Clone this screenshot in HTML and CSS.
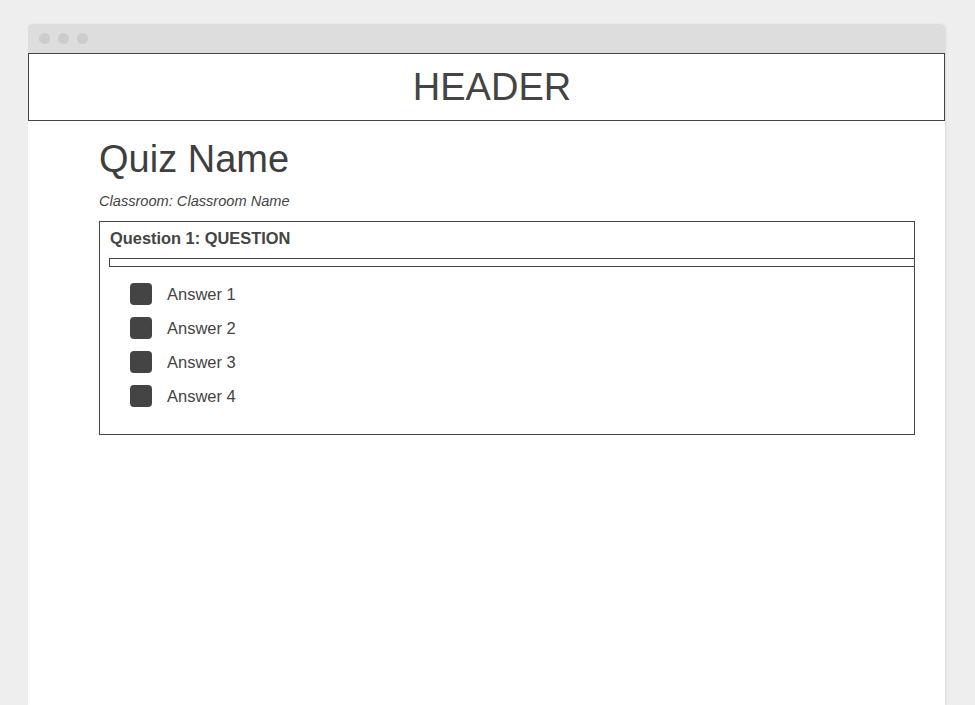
FILE: index.html
```html
<!DOCTYPE html>
<html>
<head>
<meta charset="utf-8">
<link rel="stylesheet" href="styles.css">
</head>
<body>
<div class="window">
  <div class="titlebar">
    <span class="dot"></span><span class="dot"></span><span class="dot"></span>
  </div>
  <div class="header">HEADER</div>
  <div class="content">
    <h1 class="quiz-name">Quiz Name</h1>
    <p class="classroom">Classroom: Classroom Name</p>
    <div class="question">
      <div class="question-title">Question 1: QUESTION</div>
      <div class="bar"></div>
      <ul class="answers">
        <li class="answer"><span class="box"></span><span>Answer 1</span></li>
        <li class="answer"><span class="box"></span><span>Answer 2</span></li>
        <li class="answer"><span class="box"></span><span>Answer 3</span></li>
        <li class="answer"><span class="box"></span><span>Answer 4</span></li>
      </ul>
    </div>
  </div>
</div>
</body>
</html>
```
FILE: styles.css
```css
html, body {
  margin: 0;
  padding: 0;
  background: #eeeeee;
  font-family: "Liberation Sans", Arial, sans-serif;
  color: #444444;
}
.window {
  margin: 24px 30px 0 28px;
  min-height: 681px;
  background: #ffffff;
  border-radius: 4px 4px 0 0;
  box-shadow: 1px 0 2px rgba(0,0,0,0.08);
  overflow: hidden;
}
.titlebar {
  height: 29px;
  background: #dddddd;
  display: flex;
  align-items: center;
  gap: 8px;
  padding-left: 11px;
}
.dot {
  width: 11px;
  height: 11px;
  border-radius: 50%;
  background: #cccccc;
}
.header {
  height: 66px;
  border: 1px solid #444444;
  display: flex;
  align-items: center;
  justify-content: center;
  padding-left: 11px;
  font-size: 38px;
  color: #444444;
}
.content {
  padding: 0 30px 0 71px;
}
.quiz-name {
  margin: 16px 0 0 0;
  font-size: 38px;
  line-height: 44px;
  font-weight: normal;
  color: #3f3f3f;
}
.classroom {
  margin: 12px 0 0 0;
  font-size: 14.6px;
  line-height: 16px;
  font-style: italic;
}
.question {
  margin-top: 12px;
  border: 1px solid #444444;
  padding: 6px 0 27px 0;
}
.question-title {
  padding-left: 10px;
  font-size: 16.4px;
  line-height: 20px;
  font-weight: bold;
}
.bar {
  margin: 10px 0 0 9px;
  height: 7px;
  border: 1px solid #444444;
  border-right: none;
}
.answers {
  list-style: none;
  margin: 16px 0 0 0;
  padding: 0 0 0 30px;
  display: flex;
  flex-direction: column;
  gap: 12px;
}
.answer {
  display: flex;
  align-items: center;
  gap: 15px;
  font-size: 16.5px;
  line-height: 22px;
}
.box {
  width: 22px;
  height: 22px;
  border-radius: 4px;
  background: #444444;
}
```
